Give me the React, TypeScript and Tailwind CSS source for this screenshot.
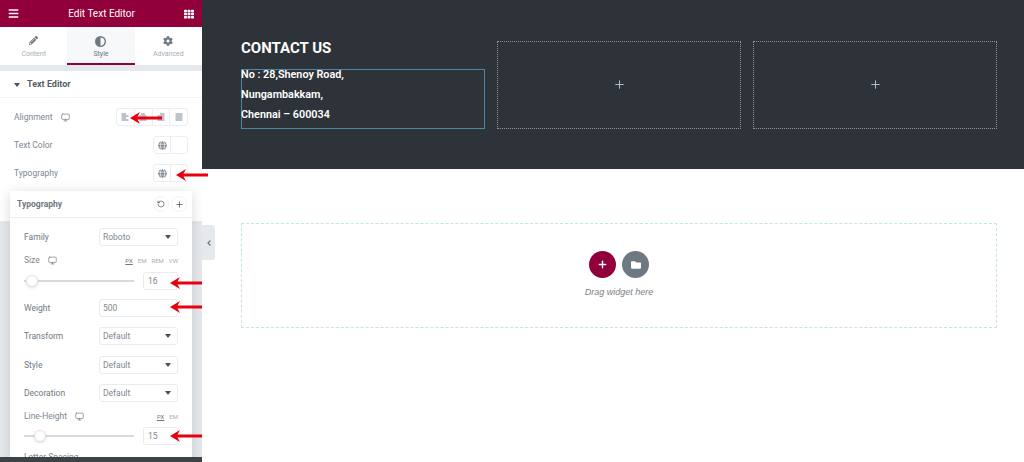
import { Monitor, Plus, RotateCcw, ChevronLeft } from "lucide-react";
import { FaAlignCenter, FaAlignJustify, FaAlignLeft, FaAlignRight, FaBars, FaCog, FaFolder, FaGlobe, FaPencilAlt, FaTh } from "react-icons/fa";
import type { ReactNode } from "react";

function Caret() {
  return <span className="w-0 h-0 border-x-[3.5px] border-x-transparent border-t-[4px] border-t-[#495157]" />;
}

function HalfCircle() {
  return (
    <svg width="11" height="11" viewBox="0 0 16 16" className="text-[#6d7882]">
      <circle cx="8" cy="8" r="7" fill="none" stroke="currentColor" strokeWidth="2" />
      <path d="M8 1a7 7 0 0 0 0 14z" fill="currentColor" />
    </svg>
  );
}

function RedArrow({ className }: { className: string }) {
  return (
    <svg width="32" height="14" viewBox="0 0 32 14" className={`absolute z-20 ${className}`}>
      <path d="M0 7 L10 1 L7.500 5.600 H32 V8.400 H7.500 L10 13 Z" fill="#e8000e" />
    </svg>
  );
}

function SelectRow({ label, value, caret = true, mb = "mb-[10px]" }: { label: string; value: string; caret?: boolean; mb?: string }) {
  return (
    <div className={`flex items-center h-[18px] ${mb}`}>
      <span className="w-[75px] text-[8.5px] text-[#6d7882]">{label}</span>
      <div className="flex-1 h-full border border-[#e9ebed] rounded-[3px] flex items-center justify-between pl-[3px] pr-[6px]">
        <span className="text-[8.5px] text-[#7d8791]">{value}</span>
        {caret && <Caret />}
      </div>
    </div>
  );
}

function SliderRow({ value, thumb }: { value: string; thumb: string }) {
  return (
    <div className="flex items-center h-[18px]">
      <div className="relative w-[110px] h-[2px] bg-[#d5dadf]">
        <span className={`absolute top-[-5px] w-[12px] h-[12px] rounded-full bg-white border border-[#e0e3e6] shadow-sm ${thumb}`} />
      </div>
      <div className="ml-[9px] flex-1 h-full border border-[#e9ebed] rounded-[3px] flex items-center pl-[4px] text-[8.5px] text-[#7d8791]">
        {value}
      </div>
    </div>
  );
}

function ControlRow({ label, children, device, width }: { label: string; children: ReactNode; device?: boolean; width: string }) {
  return (
    <div className="flex items-center h-[18px] mb-[10px]">
      <span className="text-[8.5px] text-[#7d8791]">{label}</span>
      {device && <Monitor size={9} className="ml-[8px] text-[#7d8791]" />}
      <div className={`ml-auto flex border border-[#eceef0] rounded-[3px] h-full divide-x divide-[#eceef0] ${width}`}>{children}</div>
    </div>
  );
}

function Panel() {
  return (
    <div className="relative w-[202px] h-[462px] flex flex-col shrink-0 overflow-hidden">
      <header className="h-[27px] bg-[#92003b] flex items-center justify-between pl-[8px] pr-[8px] text-white">
        <FaBars size={11} />
        <span className="text-[10px]">Edit Text Editor</span>
        <FaTh size={10} />
      </header>

      <div className="h-[38px] bg-white grid grid-cols-3 text-[7px] text-[#a4afb7]">
        <div className="flex flex-col items-center pt-[9px]">
          <FaPencilAlt size={9} className="text-[#6d7882] mb-[4px]" />
          Content
        </div>
        <div className="flex flex-col items-center pt-[9px] bg-[#f7f8f9] border-b-2 border-[#92003b] text-[#6d7882]">
          <span className="h-[13px]"><HalfCircle /></span>
          Style
        </div>
        <div className="flex flex-col items-center pt-[9px]">
          <FaCog size={10} className="text-[#6d7882] mb-[3px]" />
          Advanced
        </div>
      </div>
      <div className="h-[6px] bg-[#e6e9ec]" />

      <div className="bg-white h-[150px]">
        <div className="h-[27px] flex items-center pl-[14px] pt-[1px] border-b border-[#f1f3f5]">
          <Caret />
          <span className="ml-[7px] text-[9px] font-bold text-[#556068]">Text Editor</span>
        </div>
        <div className="pl-[14px] pr-[14px] pt-[10px]">
          <ControlRow label="Alignment" device width="w-[72px]">
            {[FaAlignLeft, FaAlignCenter, FaAlignRight, FaAlignJustify].map((Icon, i) => (
              <span key={i} className="flex-1 flex items-center justify-center text-[#7d8791]">
                <Icon size={8} />
              </span>
            ))}
          </ControlRow>
          <ControlRow label="Text Color" width="w-[35px]">
            <span className="flex-1 flex items-center justify-center"><FaGlobe size={9} className="text-[#7d8791]" /></span>
            <span className="flex-1" />
          </ControlRow>
          <ControlRow label="Typography" width="w-[35px]">
            <span className="flex-1 flex items-center justify-center"><FaGlobe size={9} className="text-[#7d8791]" /></span>
            <span className="flex-1" />
          </ControlRow>
        </div>
      </div>

      <div className="flex-1 bg-[#e6e9ec]" />
      <div className="h-[5px] bg-[#3d4247] relative z-10" />

      {/* typography popover */}
      <div className="absolute left-[10px] top-[191px] w-[182px] h-[271px] bg-white shadow-[0_2px_12px_rgba(0,0,0,0.15)]">
        <div className="h-[27px] flex items-center justify-between pl-[7px] pr-[5px] border-b border-[#eceef0]">
          <span className="text-[8.5px] font-bold text-[#6d7882]">Typography</span>
          <div className="flex gap-[2px] text-[#495157]">
            <span className="w-[16px] h-[16px] rounded-full border border-[#f1f3f5] flex items-center justify-center"><RotateCcw size={8} /></span>
            <span className="w-[16px] h-[16px] rounded-full border border-[#f1f3f5] flex items-center justify-center"><Plus size={9} /></span>
          </div>
        </div>
        <div className="pl-[14px] pr-[14px] pt-[10px]">
          <SelectRow label="Family" value="Roboto" />
          <div className="flex items-center justify-between h-[9px] mt-[2px] mb-[7px] text-[#7d8791]">
            <span className="flex items-center text-[8.5px]">Size<Monitor size={9} className="ml-[8px]" /></span>
            <span className="flex gap-[5px] text-[6px] text-[#a4afb7]"><span className="text-[#6d7882] underline">PX</span><span>EM</span><span>REM</span><span>VW</span></span>
          </div>
          <SliderRow value="16" thumb="left-[2px]" />
          <div className="h-[9px]" />
          <SelectRow label="Weight" value="500" caret={false} />
          <SelectRow label="Transform" value="Default" mb="mb-[11px]" />
          <SelectRow label="Style" value="Default" />
          <SelectRow label="Decoration" value="Default" />
          <div className="flex items-center justify-between h-[9px] mt-[5px] mb-[6px] text-[#7d8791]">
            <span className="flex items-center text-[8.5px]">Line-Height<Monitor size={9} className="ml-[8px]" /></span>
            <span className="flex gap-[5px] text-[6px] text-[#a4afb7]"><span className="text-[#6d7882] underline">PX</span><span>EM</span></span>
          </div>
          <SliderRow value="15" thumb="left-[10px]" />
          <div className="mt-[6px] text-[8.5px] text-[#7d8791]">Letter Spacing</div>
        </div>
      </div>
    </div>
  );
}

function DropCell() {
  return (
    <div className="border border-dotted border-[#8f959a] flex items-center justify-center text-[#a9bdcb] pb-[1px]">
      <Plus size={13} strokeWidth={2} />
    </div>
  );
}

export default function App() {
  return (
    <div className="relative flex w-[1024px] h-[462px] overflow-hidden bg-white font-['Roboto',sans-serif]">
      <Panel />

      <main className="flex-1">
        <section className="h-[169px] bg-[#2d3339] pl-[39px] pr-[27px] pt-[41px]">
          <div className="grid grid-cols-3 gap-[12px] h-[88px]">
            <div className="flex flex-col">
              <h2 className="text-[15px] leading-[14px] font-bold text-white">CONTACT US</h2>
              <div className="mt-[14px] h-[60px] border border-[#4f86a6] text-[10.8px] leading-[20px] font-semibold text-white">
                <p className="-mt-[5px] -ml-px">No : 28,Shenoy Road,</p>
                <p className="-ml-px">Nungambakkam,</p>
                <p className="-ml-px">Chennai – 600034</p>
              </div>
            </div>
            <DropCell />
            <DropCell />
          </div>
        </section>

        <section className="ml-[39px] mr-[27px] mt-[54px] h-[105px] border border-dashed border-[#c4e4e6] flex flex-col items-center pt-[27px]">
          <div className="flex gap-[6px]">
            <span className="w-[27px] h-[27px] rounded-full bg-[#92003b] flex items-center justify-center text-white"><Plus size={11} strokeWidth={3} /></span>
            <span className="w-[27px] h-[27px] rounded-full bg-[#6d7882] flex items-center justify-center text-white"><FaFolder size={10} /></span>
          </div>
          <span className="mt-[8px] text-[9px] italic text-[#7a7f85] font-['Liberation_Sans',sans-serif]">Drag widget here</span>
        </section>
      </main>

      {/* collapse handle */}
      <div className="absolute left-[202px] top-[225px] w-[13px] h-[35px] bg-[#e6e9ec] rounded-r-[3px] flex items-center justify-center text-[#6d7882]">
        <ChevronLeft size={8} strokeWidth={4} />
      </div>

      {/* annotation arrows */}
      <RedArrow className="left-[130px] top-[111px]" />
      <RedArrow className="left-[176px] top-[168px]" />
      <RedArrow className="left-[170px] top-[276px]" />
      <RedArrow className="left-[170px] top-[300px]" />
      <RedArrow className="left-[170px] top-[429px]" />
    </div>
  );
}
